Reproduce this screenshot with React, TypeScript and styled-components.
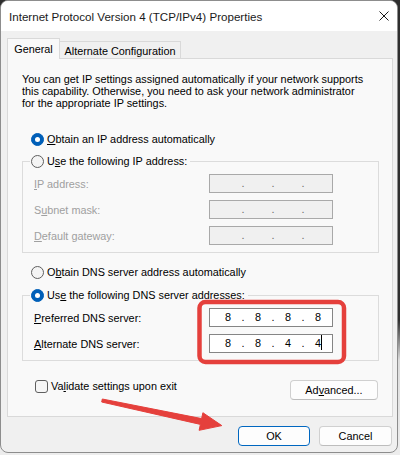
import React from "react";
import styled, { createGlobalStyle } from "styled-components";

const FONT = `"Liberation Sans", Arial, sans-serif`;

const GlobalStyle = createGlobalStyle`
  html, body, #root { margin: 0; padding: 0; }
  html {
    background: linear-gradient(to bottom, #2e2e2e 0px, #2e2e2e 320px, #dcdcdc 360px, #ededed 455px);
  }
  body {
    width: 400px;
    height: 455px;
    overflow: hidden;
    font-family: ${FONT};
    font-size: 10.85px;
    color: #000;
  }
`;

const Window = styled.div`
  position: relative;
  box-sizing: border-box;
  width: 398px;
  height: 453px;
  border: 1px solid #8d8d8d;
  border-radius: 8px;
  overflow: hidden;
  background: #f0f0f0;
  display: flex;
  flex-direction: column;
`;

const TitleBar = styled.div`
  flex: none;
  height: 30px;
  background: #ffffff;
  display: flex;
  align-items: center;
  justify-content: space-between;
  padding: 0 8px 0 8px;
`;

const Title = styled.span`
  font-size: 11.6px;
  color: #1a1a1a;
  white-space: nowrap;
`;

const Body = styled.div`
  flex: 1;
  display: flex;
  flex-direction: column;
  padding: 7px 4px 0 6px;
`;

const TabStrip = styled.div`
  display: flex;
  align-items: flex-end;
  height: 20px;
`;

const Tab = styled.div<{ $active?: boolean; $w: number }>`
  box-sizing: border-box;
  width: ${(p) => p.$w}px;
  display: flex;
  align-items: center;
  justify-content: center;
  white-space: nowrap;
  border: 1px solid #d9d9d9;
  border-bottom: none;
  ${(p) =>
    p.$active
      ? `height: 21px; margin-bottom: -1px; background: #f9f9f9; position: relative; z-index: 1;`
      : `height: 17px; border-left: none; background: #f0f0f0; padding-top: 1px;`}
`;

const Panel = styled.div`
  box-sizing: border-box;
  height: 359px;
  border: 1px solid #d9d9d9;
  background: #f9f9f9;
  padding: 14px 13px 0 14px;
  display: flex;
  flex-direction: column;
`;

const Description = styled.p`
  margin: 0 0 22px 0;
  line-height: 12px;
  white-space: nowrap;
`;

const Key = styled.span`
  text-decoration: underline;
  text-decoration-thickness: 1px;
  text-underline-offset: 1px;
`;

const OptionRow = styled.label<{ $indent?: number; $top?: number }>`
  display: flex;
  align-items: center;
  gap: 3px;
  height: 16px;
  line-height: 16px;
  white-space: nowrap;
  margin-left: ${(p) => p.$indent ?? 0}px;
  margin-top: ${(p) => p.$top ?? 0}px;
`;

const RadioMark = styled.span<{ $checked?: boolean }>`
  position: relative;
  box-sizing: border-box;
  flex: none;
  width: 13px;
  height: 13px;
  border-radius: 50%;
  ${(p) =>
    p.$checked
      ? `background: #005fb8; border: 1px solid #005fb8;`
      : `background: #f4f4f4; border: 1px solid #5f5f5f;`}
  &::after {
    content: "";
    display: ${(p) => (p.$checked ? "block" : "none")};
    position: absolute;
    left: 50%;
    top: 50%;
    width: 5px;
    height: 5px;
    margin: -2.5px 0 0 -2.5px;
    border-radius: 50%;
    background: #ffffff;
  }
`;

const CheckMark = styled.span`
  box-sizing: border-box;
  flex: none;
  width: 13px;
  height: 13px;
  border-radius: 3px;
  border: 1px solid #5f5f5f;
  background: #f6f6f6;
`;

const Group = styled.fieldset<{ $top: number }>`
  margin: ${(p) => p.$top}px 0 0 0;
  padding: 0;
  min-inline-size: 0;
  border: 1px solid #dcdcdc;
`;

const GroupLegend = styled.legend`
  margin-left: 7px;
  padding: 0 3px 0 1px;
`;

const FieldGrid = styled.div`
  display: grid;
  grid-template-columns: 175px 124px;
  grid-auto-rows: 19px;
  row-gap: 7px;
  align-items: center;
  padding: 5px 0 7px 11px;
`;

const FieldLabel = styled.span<{ $disabled?: boolean }>`
  color: ${(p) => (p.$disabled ? "#a0a0a0" : "#000")};
  white-space: nowrap;
`;

const IpBox = styled.div<{ $disabled?: boolean }>`
  box-sizing: border-box;
  width: 124px;
  height: 19px;
  display: flex;
  align-items: center;
  padding-left: 6px;
  line-height: 17px;
  border: 1px solid ${(p) => (p.$disabled ? "#a9a9a9" : "#858585")};
  background: ${(p) => (p.$disabled ? "#f0f0f0" : "#ffffff")};
  color: ${(p) => (p.$disabled ? "#6a6a6a" : "#000")};
`;

const Octet = styled.span`
  width: 24px;
  text-align: center;
  white-space: nowrap;
`;

const Dot = styled.span`
  width: 6px;
  text-align: center;
`;

const Caret = styled.span`
  display: inline-block;
  width: 0;
  height: 15px;
  border-left: 1px solid #000;
  margin-right: -1px;
  vertical-align: -3px;
`;

const BottomRow = styled.div`
  margin-top: 17px;
  display: flex;
  justify-content: space-between;
  align-items: flex-start;
`;

const Button = styled.button<{ $w: number; $default?: boolean }>`
  box-sizing: border-box;
  width: ${(p) => p.$w}px;
  height: 20px;
  padding: 0;
  font-family: ${FONT};
  font-size: 10.85px;
  color: #000;
  background: #fdfdfd;
  border-radius: 4px;
  border: 1px solid ${(p) => (p.$default ? "#0067c0" : "#d0d0d0")};
  border-bottom-color: ${(p) => (p.$default ? "#0067c0" : "#bdbdbd")};
`;

const AdvancedButton = styled(Button)`
  margin-top: 2px;
  margin-right: 1px;
`;

const Footer = styled.div`
  margin-top: 9px;
  display: flex;
  justify-content: flex-end;
  gap: 9px;
  padding-right: 1px;
`;

const Annotations = styled.svg`
  position: absolute;
  top: -1px;
  left: -1px;
  width: 398px;
  height: 453px;
  pointer-events: none;
`;

type IpProps = { values?: string[]; disabled?: boolean; caret?: boolean };

const IpField: React.FC<IpProps> = ({ values = ["", "", "", ""], disabled, caret }) => (
  <IpBox $disabled={disabled}>
    {values.map((v, i) => (
      <React.Fragment key={i}>
        <Octet>
          {v}
          {caret && i === 3 ? <Caret /> : null}
        </Octet>
        {i < 3 ? <Dot>.</Dot> : null}
      </React.Fragment>
    ))}
  </IpBox>
);

export default function App() {
  return (
    <>
      <GlobalStyle />
      <Window>
        <TitleBar>
          <Title>Internet Protocol Version 4 (TCP/IPv4) Properties</Title>
          <svg width="10" height="10" viewBox="0 0 10 10">
            <path d="M0.5 0.5 L9.5 9.5 M9.5 0.5 L0.5 9.5" stroke="#1a1a1a" strokeWidth="1" fill="none" />
          </svg>
        </TitleBar>
        <Body>
          <TabStrip>
            <Tab $active $w={53}>General</Tab>
            <Tab $w={121}>Alternate Configuration</Tab>
          </TabStrip>
          <Panel>
            <Description>
              You can get IP settings assigned automatically if your network supports
              <br />
              this capability. Otherwise, you need to ask your network administrator
              <br />
              for the appropriate IP settings.
            </Description>

            <OptionRow $indent={9}>
              <RadioMark $checked />
              <span>
                <Key>O</Key>btain an IP address automatically
              </span>
            </OptionRow>

            <Group $top={6}>
              <GroupLegend>
                <OptionRow>
                  <RadioMark />
                  <span>
                    U<Key>s</Key>e the following IP address:
                  </span>
                </OptionRow>
              </GroupLegend>
              <FieldGrid>
                <FieldLabel $disabled>
                  <Key>I</Key>P address:
                </FieldLabel>
                <IpField disabled />
                <FieldLabel $disabled>
                  S<Key>u</Key>bnet mask:
                </FieldLabel>
                <IpField disabled />
                <FieldLabel $disabled>
                  <Key>D</Key>efault gateway:
                </FieldLabel>
                <IpField disabled />
              </FieldGrid>
            </Group>

            <OptionRow $indent={9} $top={11}>
              <RadioMark />
              <span>
                O<Key>b</Key>tain DNS server address automatically
              </span>
            </OptionRow>

            <Group $top={7}>
              <GroupLegend>
                <OptionRow>
                  <RadioMark $checked />
                  <span>
                    Us<Key>e</Key> the following DNS server addresses:
                  </span>
                </OptionRow>
              </GroupLegend>
              <FieldGrid>
                <FieldLabel>
                  <Key>P</Key>referred DNS server:
                </FieldLabel>
                <IpField values={["8", "8", "8", "8"]} />
                <FieldLabel>
                  <Key>A</Key>lternate DNS server:
                </FieldLabel>
                <IpField values={["8", "8", "4", "4"]} caret />
              </FieldGrid>
            </Group>

            <BottomRow>
              <OptionRow $indent={13}>
                <CheckMark />
                <span>
                  Va<Key>l</Key>idate settings upon exit
                </span>
              </OptionRow>
              <AdvancedButton $w={88}>
                Ad<Key>v</Key>anced...
              </AdvancedButton>
            </BottomRow>
          </Panel>
          <Footer>
            <Button $w={72} $default>
              OK
            </Button>
            <Button $w={73}>Cancel</Button>
          </Footer>
        </Body>
        <Annotations viewBox="0 0 398 453">
          <rect x="199.5" y="302" width="144.5" height="60" rx="6" fill="none" stroke="#e5403c" strokeWidth="4.5" />
          <polygon
            points="102.3,399 201.6,418.6 202.9,412.7 221.8,425.6 199.1,430.3 200.4,424.4 101.7,402"
            fill="#e5403c"
            stroke="#e5403c"
            strokeWidth="1"
            strokeLinejoin="round"
          />
        </Annotations>
      </Window>
    </>
  );
}
